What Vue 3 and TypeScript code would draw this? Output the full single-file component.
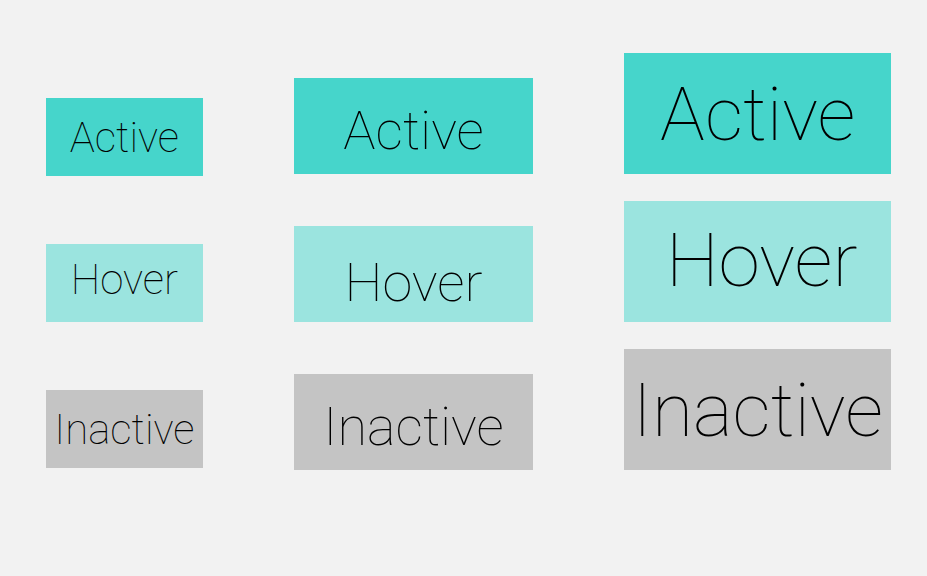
<script setup lang="ts">
type State = 'Active' | 'Hover' | 'Inactive'
type Size = 'small' | 'medium' | 'large'

const states: State[] = ['Active', 'Hover', 'Inactive']
const sizes: Size[] = ['small', 'medium', 'large']
</script>

<template>
  <main class="sheet">
    <section v-for="size in sizes" :key="size" class="column" :class="size">
      <button v-for="state in states" :key="state" type="button" :class="state.toLowerCase()">
        {{ state }}
      </button>
    </section>
  </main>
</template>

<style>
body {
  margin: 0;
  background: #f2f2f2;
}
</style>

<style scoped>
.sheet {
  display: grid;
  grid-template-columns: 157fr 240fr 267fr;
  column-gap: 91px;
  align-items: start;
  padding: 53px 36px 0 46px;
}

.column {
  display: flex;
  flex-direction: column;
}

button {
  box-sizing: border-box;
  border: 0;
  padding: 0;
  color: #000;
  font-family: Roboto, sans-serif;
  font-weight: 100;
  white-space: nowrap;
}

.active {
  background: #46d5cb;
}

.hover {
  background: #9be4df;
}

.inactive {
  background: #c4c4c4;
}

.small {
  padding-top: 45px;
  gap: 68px;
}

.small button {
  height: 78px;
  font-size: 42px;
}

.small .hover {
  padding-bottom: 8px;
}

.medium {
  padding-top: 25px;
  gap: 52px;
}

.medium button {
  height: 96px;
  padding-top: 8px;
  font-size: 54px;
}

.medium .hover {
  padding-top: 16px;
}

.large {
  gap: 27px;
}

.large button {
  height: 121px;
  font-size: 75px;
}

.large .hover {
  padding-left: 8px;
  padding-bottom: 4px;
}
</style>
